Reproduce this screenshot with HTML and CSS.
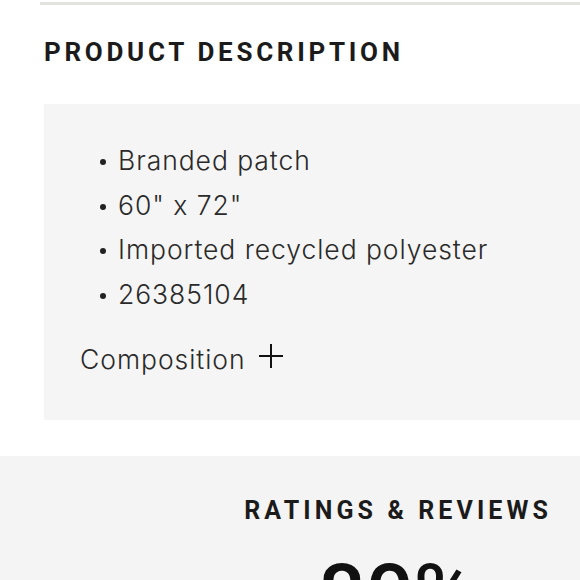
FILE: index.html
```html
<!DOCTYPE html>
<html>
<head>
<meta charset="utf-8">
<link rel="stylesheet" href="styles.css">
</head>
<body>
<div class="page">
  <div class="top-rule"></div>
  <section class="desc">
    <h2 class="title">PRODUCT DESCRIPTION</h2>
    <div class="desc-box">
      <ul class="bullets">
        <li>Branded patch</li>
        <li>60" x 72"</li>
        <li>Imported recycled polyester</li>
        <li>26385104</li>
      </ul>
      <div class="composition">
        <span>Composition</span>
        <svg class="plus" width="26" height="26" viewBox="0 0 26 26"><path d="M13 1v24M1 13h24" stroke="#111" stroke-width="2" fill="none"/></svg>
      </div>
    </div>
  </section>
  <section class="ratings">
    <h2 class="ratings-title">RATINGS &amp; REVIEWS</h2>
    <div class="big">80%</div>
  </section>
</div>
</body>
</html>
```
FILE: styles.css
```css
html, body { margin: 0; padding: 0; background: #fff; }
body { font-family: Inter, "Liberation Sans", Arial, sans-serif; color: #222; overflow: hidden; }
.page { width: 580px; height: 580px; overflow: hidden; }
.top-rule { margin: 2px 0 0 40px; height: 3px; background: #e2e2de; }
.desc { padding-left: 44px; }
.title {
  margin: 0; padding-top: 32px;
  font-family: Roboto, "Liberation Sans", sans-serif;
  font-weight: 700; font-size: 26px; letter-spacing: 3.7px;
  color: #1b1b1b; line-height: 30px;
}
.desc-box {
  margin-top: 37px; background: #f5f5f5;
  padding: 34px 0 46px 36px; height: 236px;
}
.bullets { list-style: none; margin: 0; padding: 0 0 0 20px; }
.bullets li {
  position: relative; font-size: 26.5px; font-weight: 300; line-height: 44.7px; padding-left: 18px;
  color: #2a2a2a; letter-spacing: 0.95px;
}
.bullets li::before {
  content: ""; position: absolute; left: 0; top: 21px;
  width: 6px; height: 6px; border-radius: 50%; background: #222;
}
.composition {
  display: flex; align-items: center; gap: 12px;
  margin-top: 26px; font-size: 26.5px; font-weight: 300; color: #2a2a2a; letter-spacing: 0.95px;
}
.plus { margin-top: -6px; }
.ratings {
  margin-top: 36px; background: #f4f4f4; height: 200px;
  display: flex; flex-direction: column; align-items: flex-end;
  padding-right: 28px;
}
.ratings-title {
  margin: 0; padding-top: 40px;
  font-family: Roboto, "Liberation Sans", sans-serif;
  font-weight: 700; font-size: 25px; letter-spacing: 4.1px;
  color: #1b1b1b; line-height: 30px;
}
.big {
  align-self: flex-start; margin-left: 318px; margin-top: 24px;
  font-family: Roboto, "Liberation Sans", sans-serif;
  font-weight: 500; font-size: 84px; line-height: 90px; color: #111;
}
```
